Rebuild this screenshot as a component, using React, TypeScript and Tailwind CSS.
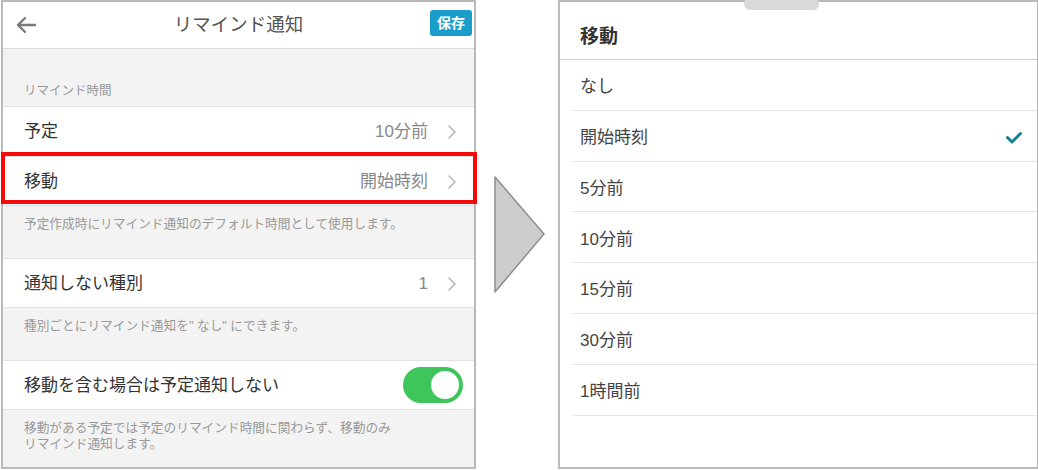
import React from "react";

const font = { fontFamily: '"Liberation Sans", "Noto Sans CJK JP", sans-serif' };

function Chevron() {
  return (
    <svg width="10" height="16" viewBox="0 0 10 16" className="ml-[19px] mr-[17px]">
      <path d="M2 2 L8 8 L2 14" fill="none" stroke="#b8b8b8" strokeWidth="1.6" strokeLinecap="round" strokeLinejoin="round" />
    </svg>
  );
}

function Row({ label, value, last }: { label: string; value?: string; last?: boolean }) {
  return (
    <div className={`flex h-[50px] items-center bg-white border-t border-[#e2e2e2] pt-[1px] ${last ? "border-b" : ""}`}>
      <span className="pl-[21px] text-[17px] text-[#333]">{label}</span>
      <span className="ml-auto text-[17px] text-[#888]">{value}</span>
      <Chevron />
    </div>
  );
}

function Note({ lines, h }: { lines: string[]; h: string }) {
  return (
    <div className={`${h} pl-[21px] pt-[10px] text-[12.7px] leading-[16px] text-[#9a9a9a]`}>
      {lines.map((l) => (
        <div key={l}>{l}</div>
      ))}
    </div>
  );
}

function Toggle() {
  return (
    <div className="mr-[11px] ml-auto flex h-[36px] w-[60px] items-center justify-end rounded-full bg-[#3ec55b] p-[2px]">
      <div className="h-[32px] w-[32px] rounded-full border-[2px] border-[#3ec55b] bg-white" />
    </div>
  );
}

function SettingsPanel() {
  return (
    <div className="ml-[1px] flex h-[469px] w-[475px] flex-col overflow-hidden border-2 border-[#b9b9b9] bg-[#f3f3f3]">
      {/* header */}
      <div className="relative flex h-[47px] shrink-0 items-center border-b border-[#dcdcdc] bg-white">
        <svg width="22" height="18" viewBox="0 0 22 18" className="ml-[12px]">
          <path d="M20 9 H3 M10 2 L3 9 L10 16" fill="none" stroke="#7a7a7a" strokeWidth="2.4" strokeLinecap="round" strokeLinejoin="round" />
        </svg>
        <div className="absolute inset-x-0 text-center text-[18.5px] text-[#555] pointer-events-none">リマインド通知</div>
        <div className="ml-auto mr-[2px] mb-[4px] flex h-[26px] w-[42px] items-center justify-center rounded-[3px] bg-[#1a9dcb] text-[14px] font-bold text-white">
          保存
        </div>
      </div>

      <div className="flex h-[57px] shrink-0 items-end pb-[5px] pl-[21px] text-[12.5px] text-[#9a9a9a]">リマインド時間</div>
      <Row label="予定" value="10分前" />
      <Row label="移動" value="開始時刻" last />
      <Note h="h-[52px]" lines={["予定作成時にリマインド通知のデフォルト時間として使用します。"]} />
      <Row label="通知しない種別" value="1" last />
      <Note h="h-[52px]" lines={["種別ごとにリマインド通知を\" なし\" にできます。"]} />
      <div className="flex h-[50px] shrink-0 items-center border-y border-[#e2e2e2] bg-white">
        <span className="pl-[21px] pt-[1px] text-[17px] text-[#333]">移動を含む場合は予定通知しない</span>
        <Toggle />
      </div>
      <Note h="flex-1" lines={["移動がある予定では予定のリマインド時間に関わらず、移動のみ", "リマインド通知します。"]} />
    </div>
  );
}

const options = ["なし", "開始時刻", "5分前", "10分前", "15分前", "30分前", "1時間前"];

function PickerPanel() {
  return (
    <div className="relative flex h-[469px] flex-1 flex-col border-2 border-r-[1px] border-[#b9b9b9] bg-white">
      <div className="absolute left-[184px] top-[-2px] h-[10px] w-[75px] rounded-b-[6px] rounded-t-[2px] bg-[#d9d9d9]" />
      <div className="flex h-[58px] shrink-0 items-center border-b border-[#cfcfcf] pl-[20px] pt-[14px] text-[19px] font-bold text-[#333]">
        移動
      </div>
      {options.map((o) => (
        <div key={o} className="ml-[13px] flex h-[50.8px] shrink-0 items-center border-b border-[#e6e6e6] pl-[7px] pt-[4px]">
          <span className="text-[17px] text-[#444]">{o}</span>
          {o === "開始時刻" && (
            <svg width="18" height="13" viewBox="0 0 18 13" className="ml-auto mr-[14px]">
              <path d="M2.5 6.5 L7 11 L15.5 2.5" fill="none" stroke="#17808f" strokeWidth="3" strokeLinecap="round" strokeLinejoin="round" />
            </svg>
          )}
        </div>
      ))}
    </div>
  );
}

export default function App() {
  return (
    <div className="relative flex h-[470px] w-[1038px] bg-white" style={font}>
      <SettingsPanel />
      {/* transition arrow */}
      <div className="flex w-[82px] shrink-0 items-center justify-start pl-[18px]">
        <svg width="52" height="118" viewBox="0 0 52 118">
          <polygon points="1,1 50,58 1,116" fill="#cdcdcd" stroke="#8e8e8e" strokeWidth="1.5" strokeLinejoin="round" />
        </svg>
      </div>
      <PickerPanel />
      {/* highlight frame around the 移動 row */}
      <div className="pointer-events-none absolute left-[1px] top-[152px] h-[52px] w-[476px] border-[4px] border-[#f50a0a]" />
    </div>
  );
}
